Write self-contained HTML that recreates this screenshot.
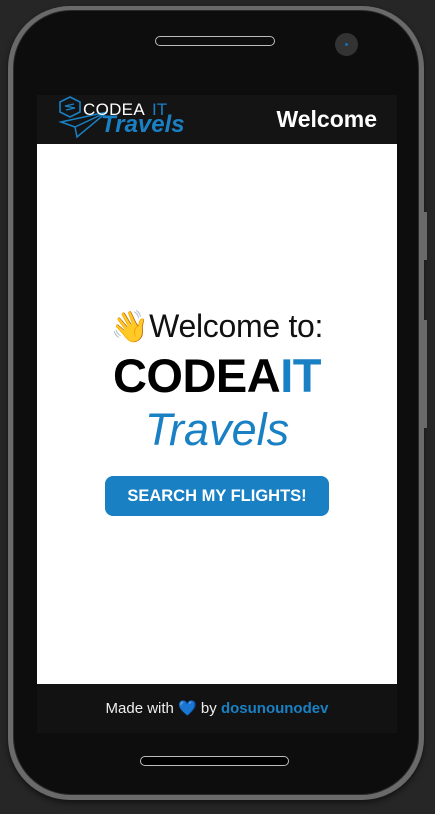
<!DOCTYPE html>
<html><head><meta charset="utf-8"><style>
html,body{margin:0;padding:0;width:435px;height:814px;background:#262626;overflow:hidden;font-family:"Liberation Sans",sans-serif}
.phone{position:absolute;left:8px;top:6px;width:416px;height:794px;border-radius:62px;background:#6a6a6a;box-shadow:0 3px 6px rgba(0,0,0,.5)}
.inner{position:absolute;left:5px;top:4px;right:5px;bottom:5px;border-radius:58px;background:#0d0d0d;border:1px solid #2a2a2a}
.btn1{position:absolute;left:423px;top:212px;width:4px;height:48px;background:#6a6a6a}
.btn2{position:absolute;left:423px;top:320px;width:4px;height:108px;background:#6a6a6a}
.speaker{position:absolute;left:155px;top:36px;width:118px;height:8px;border:1.5px solid #bbb;border-radius:6px;background:#0d0d0d}
.cam{position:absolute;left:335px;top:33px;width:23px;height:23px;border-radius:50%;background:#333}
.cam:after{content:"";position:absolute;left:10px;top:10px;width:3px;height:3px;border-radius:50%;background:#1a6fb0}
.home{position:absolute;left:140px;top:756px;width:147px;height:8px;border:1.5px solid #bbb;border-radius:6px;background:#000}
.header{position:absolute;left:37px;top:95px;width:360px;height:49px;background:#141414}
.main{position:absolute;left:37px;top:144px;width:360px;height:540px;background:#fff;text-align:center}
.footer{position:absolute;left:37px;top:684px;width:360px;height:49px;background:#121212;color:#eee;font-size:15px;text-align:center;line-height:50px}
.w{position:absolute;right:20px;top:11px;color:#fff;font-weight:bold;font-size:23px}
</style></head><body>
<div class="phone"><div class="inner"></div></div>
<div class="btn1"></div><div class="btn2"></div>
<div class="speaker"></div><div class="cam"></div><div class="home"></div>
<div class="header">
<svg style="position:absolute;left:20px;top:0px" width="150" height="46" viewBox="0 0 150 46">
<path d="M13 2 L23 7 L23 17 L13 22 L3 17 L3 7 Z" fill="none" stroke="#1a80c4" stroke-width="1.6"/>
<path d="M8 11 L17 9 M9 15 L18 13 M8 11 L18 13" stroke="#1a80c4" stroke-width="1.4" fill="none"/>
<path d="M4 27 L50 17 L20 42 L18 32 Z M18 32 L50 17" fill="none" stroke="#1a80c4" stroke-width="1.5"/>
<text x="26" y="20" fill="#fff" font-size="17" font-family="Liberation Sans" letter-spacing="0.3">CODEA</text>
<text x="95" y="20" fill="#1a80c4" font-size="17" font-family="Liberation Sans">IT</text>
<text x="44" y="37" fill="#1a80c4" font-size="24" font-style="italic" font-weight="bold" font-family="Liberation Sans">Travels</text>
</svg>
<div class="w">Welcome</div>
</div>
<div class="main">
<div style="position:absolute;left:0;right:0;top:164px;font-size:32px;color:#111;letter-spacing:-0.3px"><span style="font-size:31px">👋</span>Welcome to:</div>
<div style="position:absolute;left:0;right:0;top:204px;font-size:47px;font-weight:bold;color:#000;letter-spacing:-0.5px">CODEA<span style="color:#1a80c4">IT</span></div>
<div style="position:absolute;left:0;right:0;top:260px;font-size:45px;font-style:italic;color:#1a80c4">Travels</div>
<div style="position:absolute;left:68px;top:332px;width:224px;height:40px;border-radius:8px;background:#1a80c4;color:#fff;font-weight:bold;font-size:16.5px;line-height:40px">SEARCH MY FLIGHTS!</div>
</div>
<div class="footer">Made with <span style="color:#2a8be0">💙</span> by <b style="color:#1a80c4">dosunounodev</b></div>
</body></html>
